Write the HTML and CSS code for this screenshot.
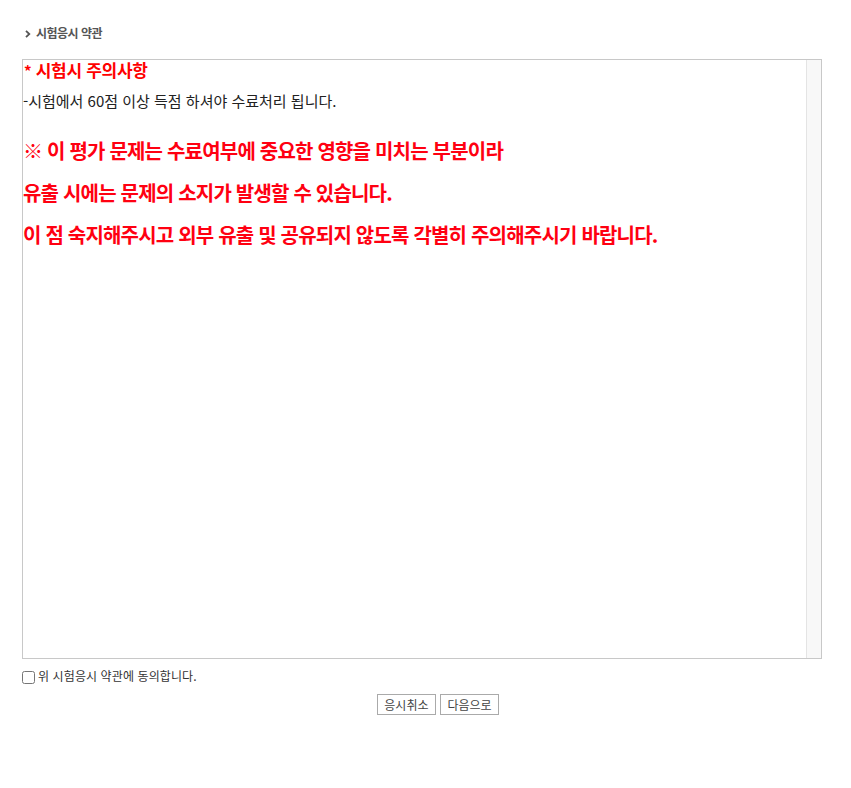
FILE: index.html
```html
<!DOCTYPE html>
<html lang="ko">
<head>
<meta charset="utf-8">
<link rel="stylesheet" href="styles.css">
</head>
<body>
<div class="wrap">
  <h2 class="page-title"><svg class="chev" width="6" height="8" viewBox="0 0 6 8"><path d="M1 0.8 L4.3 4 L1 7.2" fill="none" stroke="#555" stroke-width="1.8"/></svg>시험응시 약관</h2>
  <div class="terms">
    <div class="terms-body">
      <p class="notice-title"><span class="star">*</span> 시험시 주의사항</p>
      <p class="notice-text">-시험에서 60점 이상 득점 하셔야 수료처리 됩니다.</p>
      <div class="warn">
        <p>※ 이 평가 문제는 수료여부에 중요한 영향을 미치는 부분이라</p>
        <p>유출 시에는 문제의 소지가 발생할 수 있습니다.</p>
        <p>이 점 숙지해주시고 외부 유출 및 공유되지 않도록 각별히 주의해주시기 바랍니다.</p>
      </div>
    </div>
    <div class="track"></div>
  </div>
  <label class="agree"><input type="checkbox" class="chk"><span>위 시험응시 약관에 동의합니다.</span></label>
  <div class="btns">
    <button class="btn">응시취소</button>
    <button class="btn">다음으로</button>
  </div>
</div>
</body>
</html>
```
FILE: styles.css
```css
* { box-sizing: border-box; }
body {
  margin: 0;
  background: #fff;
  font-family: "Noto Sans CJK KR", "Noto Sans", sans-serif;
  color: #222;
}
.wrap {
  padding: 24px 29px 0 22px;
}
.page-title {
  margin: 0 0 17px 3px;
  font-size: 12px;
  font-weight: 700;
  color: #555;
  letter-spacing: -0.5px;
  line-height: 18px;
  display: flex;
  align-items: center;
}
.chev {
  margin-right: 5px;
  margin-top: 1px;
}
.terms {
  height: 600px;
  border: 1px solid #c8c8c8;
  display: flex;
}
.terms-body {
  flex: 1;
  padding: 0;
}
.track {
  width: 15px;
  background: #f8f8f8;
  border-left: 1px solid #e4e4e4;
}
.notice-title {
  margin: 0;
  font-size: 17px;
  font-weight: 700;
  color: #ff0000;
  line-height: 20px;
  letter-spacing: -0.3px;
}
.star {
  font-size: 15px;
  display: inline-block;
  margin-left: 1px;
}
.notice-text {
  margin: 9px 0 0;
  font-size: 15px;
  line-height: 22px;
  color: #222;
  letter-spacing: 0;
}
.warn {
  margin-top: 18px;
}
.warn p {
  margin: 0;
  font-size: 20px;
  font-weight: 700;
  color: #ff0011;
  line-height: 42px;
  letter-spacing: -0.8px;
}
.agree {
  display: flex;
  align-items: center;
  margin-top: 10px;
  font-size: 12px;
  color: #333;
  line-height: 16px;
  letter-spacing: 0.1px;
}
.chk {
  margin: 1px 3px 0 0;
  width: 13px;
  height: 13px;
}
.agree span {
  position: relative;
  top: -1px;
}
.btns {
  display: flex;
  justify-content: center;
  gap: 4px;
  margin-top: 9px;
  padding-left: 32px;
}
.btn {
  font-family: inherit;
  font-size: 12px;
  color: #444;
  background: #fff;
  border: 1px solid #aaa;
  padding: 0 6.5px;
  height: 21px;
  line-height: 19px;
  border-radius: 0;
}
```
